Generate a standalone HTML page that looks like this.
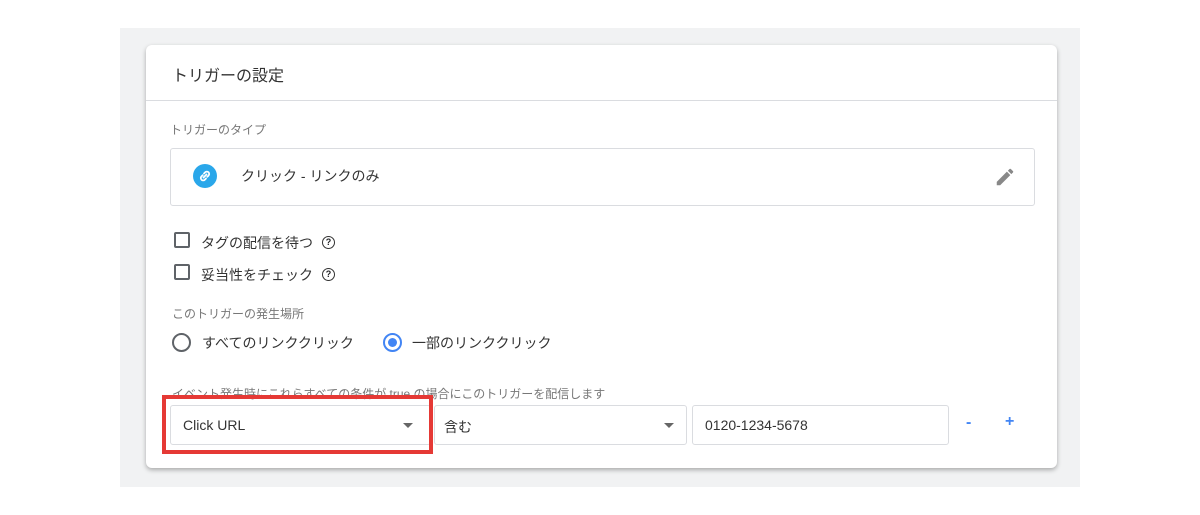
<!DOCTYPE html>
<html><head><meta charset="utf-8"><style>
*{box-sizing:border-box;margin:0;padding:0}
body{width:1200px;height:515px;background:#fff;font-family:"Liberation Sans","Noto Sans CJK JP",sans-serif;position:relative;overflow:hidden;color:#202124}
.bg{position:absolute;left:120px;top:28px;width:960px;height:459px;background:#f1f2f3}
.card{position:absolute;left:146px;top:45px;width:911px;height:423px;background:#fff;border-radius:6px;box-shadow:0 2px 5px rgba(0,0,0,.3)}
.a{position:absolute}
.hdr{left:0;top:0;width:911px;height:56px;border-bottom:1px solid #dadce0}
.box{border:1px solid #dadce0;border-radius:3px;background:#fff}
.cb{width:16px;height:16px;border:2px solid #5f6368;border-radius:2px}
.q{width:13px;height:13px;border:1.5px solid #333;border-radius:50%;font-size:9px;font-weight:bold;text-align:center;line-height:10px}
.lbl{font-size:12px;color:#777}
.t{font-size:14px}
</style></head><body>
<div class="bg"></div>
<div class="card">
<div class="a hdr"></div>
<div class="a" style="left:26px;top:17px;font-size:16px;color:#333">トリガーの設定</div>
<div class="a lbl" style="left:24px;top:76px">トリガーのタイプ</div>
<div class="a box" style="left:24px;top:103px;width:865px;height:58px"></div>
<div class="a" style="left:47px;top:119px;width:24px;height:24px;border-radius:50%;background:#2aa7ea">
<svg width="24" height="24" viewBox="0 0 24 24"><g fill="none" stroke="#fff" stroke-width="1.8" stroke-linecap="round"><path d="M11 9.5l1.2-1.2a2.3 2.3 0 013.3 3.3L14.3 12.8"/><path d="M13 14.5l-1.2 1.2a2.3 2.3 0 01-3.3-3.3L9.7 11.2"/><path d="M10.5 13.5l3-3"/></g></svg></div>
<div class="a t" style="left:95px;top:121px;color:#333">クリック - リンクのみ</div>
<svg class="a" style="left:848px;top:121px" width="22" height="22" viewBox="0 0 24 24"><path fill="#888" d="M3 17.25V21h3.75L17.8 9.94l-3.75-3.75L3 17.25zM20.7 7.04a1 1 0 000-1.41l-2.34-2.34a1 1 0 00-1.41 0l-1.83 1.83 3.75 3.75 1.83-1.83z"/></svg>
<div class="a cb" style="left:28px;top:187px"></div>
<div class="a t" style="left:55px;top:188px;color:#333">タグの配信を待つ</div>
<div class="a q" style="left:176px;top:191px">?</div>
<div class="a cb" style="left:28px;top:219px"></div>
<div class="a t" style="left:55px;top:220px;color:#333">妥当性をチェック</div>
<div class="a q" style="left:176px;top:223px">?</div>
<div class="a lbl" style="left:26px;top:260px">このトリガーの発生場所</div>
<div class="a" style="left:26px;top:288px;width:19px;height:19px;border:2px solid #5f6368;border-radius:50%"></div>
<div class="a t" style="left:56px;top:288px;color:#333">すべてのリンククリック</div>
<div class="a" style="left:237px;top:288px;width:19px;height:19px;border:2px solid #4285f4;border-radius:50%"><div style="margin:3px;width:9px;height:9px;border-radius:50%;background:#4285f4"></div></div>
<div class="a t" style="left:266px;top:288px;color:#333">一部のリンククリック</div>
<div class="a lbl" style="left:26px;top:340px">イベント発生時にこれらすべての条件が true の場合にこのトリガーを配信します</div>
<div class="a box" style="left:24px;top:360px;width:261px;height:40px"></div>
<div class="a t" style="left:37px;top:372px;color:#333">Click URL</div>
<div class="a" style="left:257px;top:378px;border-left:5px solid transparent;border-right:5px solid transparent;border-top:5px solid #666"></div>
<div class="a box" style="left:288px;top:360px;width:253px;height:40px"></div>
<div class="a t" style="left:298px;top:372px;color:#333">含む</div>
<div class="a" style="left:518px;top:378px;border-left:5px solid transparent;border-right:5px solid transparent;border-top:5px solid #666"></div>
<div class="a box" style="left:546px;top:360px;width:257px;height:40px"></div>
<div class="a t" style="left:559px;top:372px;color:#333">0120-1234-5678</div>
<div class="a" style="left:820px;top:369px;color:#4285f4;font-size:16px;font-weight:bold">-</div>
<div class="a" style="left:859px;top:368px;color:#4285f4;font-size:16px;font-weight:bold">+</div>
<div class="a" style="left:16px;top:350px;width:271px;height:59px;border:4px solid #e53935"></div>
</div>
</body></html>
